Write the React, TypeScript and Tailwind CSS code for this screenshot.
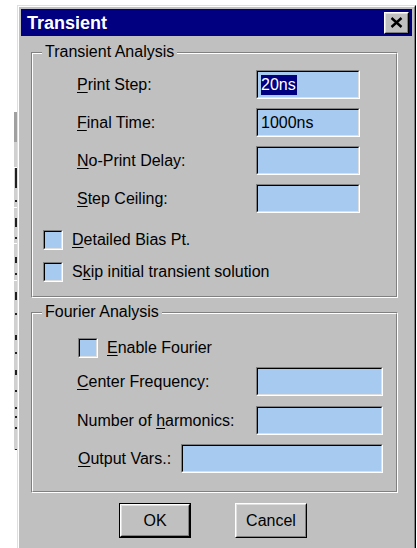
import type { ReactNode } from "react";

// Underlined access-key letter, as in classic dialog labels
function Key({ children }: { children: ReactNode }) {
    return <span className="underline underline-offset-[2px] decoration-1">{children}</span>;
}

function Sunken({ className = "", children }: { className?: string; children?: ReactNode }) {
    return (
        <div className={`flex-none border border-t-[#808080] border-l-[#808080] border-b-white border-r-white ${className}`}>
            <div className="h-full flex items-center pl-[3px] border border-t-black border-l-black border-b-[#dfdfdf] border-r-[#dfdfdf] bg-[#a6caf0]">
                {children}
            </div>
        </div>
    );
}

function Checkbox({ label, className = "" }: { label: ReactNode; className?: string }) {
    return (
        <div className={`flex items-center h-[20px] ${className}`}>
            <Sunken className="w-[20px] h-[20px]" />
            <span className="ml-[9px]">{label}</span>
        </div>
    );
}

function Group({ title, className = "", children }: { title: string; className?: string; children: ReactNode }) {
    return (
        <div className={`w-[367px] border border-t-[#808080] border-l-[#808080] border-r-white border-b-white ${className}`}>
            <div className="flex flex-col border border-t-white border-l-white border-r-[#808080] border-b-[#808080]">
                <div className="self-start -mt-[11px] ml-[9px] px-[3px] leading-[18px] bg-[#c0c0c0]">{title}</div>
                {children}
            </div>
        </div>
    );
}

function FieldRow({
    label,
    labelWidth = "w-[223px] pl-[44px]",
    inputWidth,
    className = "",
    value,
}: {
    label: ReactNode;
    labelWidth?: string;
    inputWidth: string;
    className?: string;
    value?: ReactNode;
}) {
    return (
        <div className={`flex items-center h-[29px] ${className}`}>
            <div className={`flex-none ${labelWidth}`}>{label}</div>
            <Sunken className={`h-[29px] ${inputWidth}`}>{value}</Sunken>
        </div>
    );
}

function Button({ children, isDefault = false, className = "" }: { children: ReactNode; isDefault?: boolean; className?: string }) {
    const face = (
        <div className="h-full border border-t-white border-l-white border-r-black border-b-black">
            <div className="h-full flex items-center justify-center border border-t-[#dfdfdf] border-l-[#dfdfdf] border-r-[#808080] border-b-[#808080]">
                {children}
            </div>
        </div>
    );
    return (
        <div className={`w-[72px] h-[35px] flex-none ${isDefault ? "border border-black" : ""} ${className}`}>
            {face}
        </div>
    );
}

// Edge of the window lying behind the dialog
function BackdropEdge() {
    const marks: [number, number][] = [
        [0, 30], [56, 20], [88, 2], [106, 9], [125, 2], [145, 6], [161, 2], [180, 8],
        [201, 2], [223, 5], [240, 2], [258, 5], [278, 2], [295, 2], [304, 2], [315, 2], [337, 2],
    ];
    return (
        <svg width="3" height="338" className="ml-[14px] mt-[112px] block">
            <rect x="0" y="0" width="3" height="338" fill="#d0d0d0" />
            <rect x="0" y="0" width="3" height="30" fill="#a0a0a0" />
            {marks.slice(1).map(([y, h], i) => (
                <rect key={i} x="1" y={y} width="2" height={h} fill="#202020" />
            ))}
            <rect x="0" y="55" width="3" height="1" fill="#ffffff" />
            <rect x="0" y="95" width="3" height="1" fill="#ffffff" />
            <rect x="0" y="131" width="3" height="1" fill="#ffffff" />
            <rect x="0" y="168" width="3" height="1" fill="#ffffff" />
        </svg>
    );
}

export default function App() {
    return (
        <div className="w-[417px] h-[548px] overflow-hidden bg-white flex font-['Liberation_Sans',Arial,sans-serif] text-[16px] text-black">
            <div className="w-[17px] flex-none">
                <BackdropEdge />
            </div>

            <div className="mt-[5px] w-[399px] h-[560px] flex-none border border-t-[#dfdfdf] border-l-[#dfdfdf] border-r-black border-b-black">
                <div className="h-full flex flex-col p-[2px] bg-[#c0c0c0] border border-t-white border-l-white border-r-[#808080] border-b-[#808080]">
                    {/* Title bar */}
                    <div className="h-[27px] flex-none flex items-center pl-[6px] pr-[3px] bg-[#000080]">
                        <span className="text-white font-bold text-[18px] leading-none">Transient</span>
                        <div className="ml-auto w-[25px] h-[22px] border border-t-white border-l-white border-r-black border-b-black">
                            <div className="h-full flex items-center justify-center bg-[#c0c0c0] border border-t-[#dfdfdf] border-l-[#dfdfdf] border-r-[#808080] border-b-[#808080]">
                                <svg width="13" height="11" viewBox="0 0 13 11">
                                    <path d="M1.5 1 L11.5 10 M11.5 1 L1.5 10" stroke="#000" strokeWidth="2.4" fill="none" />
                                </svg>
                            </div>
                        </div>
                    </div>

                    <div className="flex flex-col pl-[10px]">
                        <Group title="Transient Analysis" className="mt-[16px]">
                            <div className="flex flex-col pb-[14px]">
                                <FieldRow
                                    className="mt-[9px]"
                                    label={<><Key>P</Key>rint Step:</>}
                                    inputWidth="w-[104px]"
                                    value={<span className="bg-[#000080] text-white leading-[20px] pr-[1px]">20ns</span>}
                                />
                                <FieldRow className="mt-[9px]" label={<><Key>F</Key>inal Time:</>} inputWidth="w-[104px]" value="1000ns" />
                                <FieldRow className="mt-[9px]" label={<><Key>N</Key>o-Print Delay:</>} inputWidth="w-[104px]" />
                                <FieldRow className="mt-[9px]" label={<><Key>S</Key>tep Ceiling:</>} inputWidth="w-[104px]" />
                                <Checkbox className="mt-[17px] ml-[10px]" label={<><Key>D</Key>etailed Bias Pt.</>} />
                                <Checkbox className="mt-[12px] ml-[10px]" label={<>S<Key>k</Key>ip initial transient solution</>} />
                            </div>
                        </Group>

                        <Group title="Fourier Analysis" className="mt-[14px]">
                            <div className="flex flex-col pb-[18px]">
                                <Checkbox className="mt-[17px] ml-[45px]" label={<><Key>E</Key>nable Fourier</>} />
                                <FieldRow className="mt-[9px]" label={<><Key>C</Key>enter Frequency:</>} inputWidth="w-[127px]" />
                                <FieldRow className="mt-[10px]" label={<>Number of <Key>h</Key>armonics:</>} inputWidth="w-[127px]" />
                                <FieldRow
                                    className="mt-[9px]"
                                    labelWidth="w-[148px] pl-[45px]"
                                    label={<><Key>O</Key>utput Vars.:</>}
                                    inputWidth="w-[202px]"
                                />
                            </div>
                        </Group>

                        <div className="flex mt-[10px] ml-[88px] gap-[44px]">
                            <Button isDefault>OK</Button>
                            <Button>Cancel</Button>
                        </div>
                    </div>
                </div>
            </div>
        </div>
    );
}
